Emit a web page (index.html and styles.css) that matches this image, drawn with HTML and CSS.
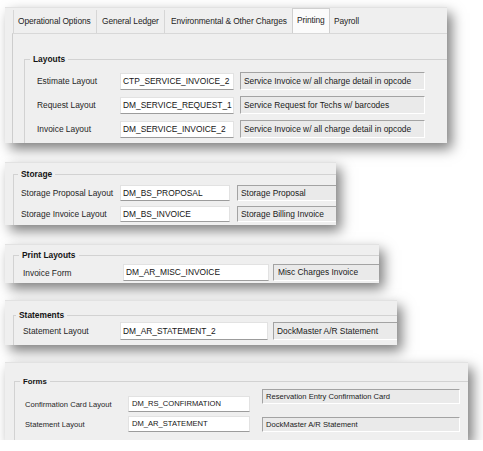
FILE: index.html
```html
<!DOCTYPE html>
<html>
<head>
<meta charset="utf-8">
<link rel="stylesheet" href="styles.css">
</head>
<body>
<div class="canvas">

  <section class="panel p1">
    <div class="tabs">
      <div class="tab t1">Operational Options</div>
      <div class="tab t2">General Ledger</div>
      <div class="tab t3">Environmental &amp; Other Charges</div>
      <div class="tab t4 sel">Printing</div>
      <div class="tab t5">Payroll</div>
    </div>
    <div class="page">
      <fieldset class="group g1">
        <legend>Layouts</legend>
        <div class="rows">
          <div class="row"><span class="lbl">Estimate Layout</span><span class="val">CTP_SERVICE_INVOICE_2</span><span class="desc">Service Invoice w/ all charge detail in opcode</span></div>
          <div class="row"><span class="lbl">Request Layout</span><span class="val">DM_SERVICE_REQUEST_1</span><span class="desc">Service Request for Techs w/ barcodes</span></div>
          <div class="row"><span class="lbl">Invoice Layout</span><span class="val">DM_SERVICE_INVOICE_2</span><span class="desc">Service Invoice w/ all charge detail in opcode</span></div>
        </div>
      </fieldset>
    </div>
  </section>

  <section class="panel p2">
    <fieldset class="group g2">
      <legend>Storage</legend>
      <div class="rows">
        <div class="row"><span class="lbl">Storage Proposal Layout</span><span class="val">DM_BS_PROPOSAL</span><span class="desc">Storage Proposal</span></div>
        <div class="row"><span class="lbl">Storage Invoice Layout</span><span class="val">DM_BS_INVOICE</span><span class="desc">Storage Billing Invoice</span></div>
      </div>
    </fieldset>
  </section>

  <section class="panel p3">
    <fieldset class="group g3">
      <legend>Print Layouts</legend>
      <div class="rows">
        <div class="row"><span class="lbl">Invoice Form</span><span class="val">DM_AR_MISC_INVOICE</span><span class="desc">Misc Charges Invoice</span></div>
      </div>
    </fieldset>
  </section>

  <section class="panel p4">
    <fieldset class="group g4">
      <legend>Statements</legend>
      <div class="rows">
        <div class="row"><span class="lbl">Statement Layout</span><span class="val">DM_AR_STATEMENT_2</span><span class="desc">DockMaster A/R Statement</span></div>
      </div>
    </fieldset>
  </section>

  <section class="panel p5">
    <fieldset class="group g5">
      <legend>Forms</legend>
      <div class="rows">
        <div class="row"><span class="lbl">Confirmation Card Layout</span><span class="val">DM_RS_CONFIRMATION</span><span class="desc raised">Reservation Entry Confirmation Card</span></div>
        <div class="row"><span class="lbl">Statement Layout</span><span class="val">DM_AR_STATEMENT</span><span class="desc">DockMaster A/R Statement</span></div>
      </div>
    </fieldset>
  </section>

</div>
</body>
</html>
```

FILE: styles.css
```css
* { box-sizing: border-box; }

body {
  margin: 0;
  background: #ffffff;
  font-family: "Liberation Sans", Arial, sans-serif;
  color: #1c1c1c;
}

.canvas {
  display: flex;
  flex-direction: column;
  align-items: flex-start;
  padding: 7px 0 0 5px;
}

.panel {
  background: #efefef;
  overflow: hidden;
  box-shadow: 5px 6px 12px rgba(0, 0, 0, 0.5);
  font-size: 8.4px;
  border-top: 1px solid #e2e2e2;
  flex-shrink: 0;
}

.p1 { width: 442px; height: 136px; }
.p2 { width: 331px; height: 63px; margin-top: 19px; }
.p3 { width: 374px; height: 39px; margin-top: 19px; }
.p4 { width: 392px; height: 45px; margin-top: 17px; }
.p5 { width: 463px; height: 78px; margin-top: 17px; font-size: 7.6px; }

/* tabs */
.tabs {
  display: flex;
  align-items: flex-end;
  height: 25px;
  padding-left: 8px;
}
.tab {
  height: 23px;
  line-height: 22px;
  padding-left: 4px;
  border-right: 1px solid #d6d6d6;
  white-space: nowrap;
  color: #242424;
  flex-shrink: 0;
  letter-spacing: -0.1px;
}
.t1 { width: 84px; border-left: 1px solid #d6d6d6; }
.t2 { width: 68px; padding-left: 5px; }
.t3 { width: 127px; padding-left: 6px; border-right: none; }
.t4 { width: 38px; }
.t5 { width: 34px; border-right: none; }
.sel {
  height: 25px;
  line-height: 23px;
  background: #fbfbfb;
  border: 1px solid #cfcfcf;
  border-bottom: none;
}

.page {
  height: 111px;
  margin-left: 7px;
  border-left: 1px solid #cdcdcd;
  border-top: 1px solid #d8d8d8;
  padding: 20px 0 0 11px;
}

/* group boxes */
.group {
  margin: 0;
  padding: 0;
  min-width: 0;
  border: 1px solid #d2d2d2;
  flex-shrink: 0;
}
.group legend {
  padding: 0 3px;
  font-weight: bold;
  line-height: 11px;
  color: #141414;
}

.g1 { width: 440px; height: 100px; }
.g1 legend { margin-left: 5px; }
.g1 .rows { padding: 7px 0 0 12px; gap: 6px; }

.g2 { width: 340px; height: 70px; margin: 6px 0 0 8px; }
.g2 legend { margin-left: 4px; }
.g2 .rows { padding: 5px 0 0 7px; gap: 5px; }

.g3 { width: 400px; height: 50px; margin: 5px 0 0 8px; }
.g3 legend { margin-left: 5px; }
.g3 .rows { padding: 3px 0 0 9px; }

.g4 { width: 420px; height: 50px; margin: 9px 0 0 8px; }
.g4 legend { margin-left: 2px; }
.g4 .rows { padding: 1px 0 0 9px; }

.g5 { width: 470px; height: 80px; margin: 13px 0 0 9px; }
.g5 legend { margin-left: 5px; font-size: 7.8px; }
.g5 .rows { padding: 9px 0 0 10px; gap: 4px; }

.rows {
  display: flex;
  flex-direction: column;
}

.row {
  display: flex;
  align-items: center;
  height: 18px;
  white-space: nowrap;
}
.row > span { flex-shrink: 0; }

.lbl { color: #262626; }

.val {
  height: 17px;
  line-height: 15px;
  padding-left: 2px;
  background: #ffffff;
  border: 1px solid #e2e2e2;
  border-bottom-color: #9c9c9c;
  color: #151515;
  overflow: hidden;
}

.desc {
  height: 18px;
  line-height: 16px;
  padding-left: 3px;
  background: #eaeaea;
  border: 1px solid;
  border-color: #a3a3a3 #ffffff #ffffff #a3a3a3;
  overflow: hidden;
  color: #1a1a1a;
}

/* panel 1 sizes */
.g1 .lbl { width: 83px; }
.g1 .val { width: 114px; }
.g1 .desc { width: 185px; margin-left: 6px; }

/* panel 2 */
.g2 .row { height: 16px; }
.g2 .lbl { width: 99px; }
.g2 .val { width: 110px; height: 16px; line-height: 14px; }
.g2 .desc { width: 140px; height: 16px; line-height: 14px; margin-left: 7px; }

/* panel 3 */
.g3 .row { height: 17px; }
.g3 .lbl { width: 100px; }
.g3 .val { width: 146px; }
.g3 .desc { width: 140px; height: 17px; line-height: 15px; margin-left: 4px; padding-left: 4px; }

/* panel 4 */
.g4 .lbl { width: 97px; }
.g4 .val { width: 148px; height: 18px; line-height: 16px; }
.g4 .desc { width: 150px; margin-left: 5px; }

/* panel 5 */
.g5 .row { height: 16px; }
.g5 .lbl { width: 103px; }
.g5 .val { width: 122px; height: 16px; line-height: 14px; padding-left: 3px; }
.g5 .desc { width: 198px; height: 15px; line-height: 13px; margin-left: 12px; }
.g5 .desc.raised { align-self: flex-start; margin-top: -7px; }
```
